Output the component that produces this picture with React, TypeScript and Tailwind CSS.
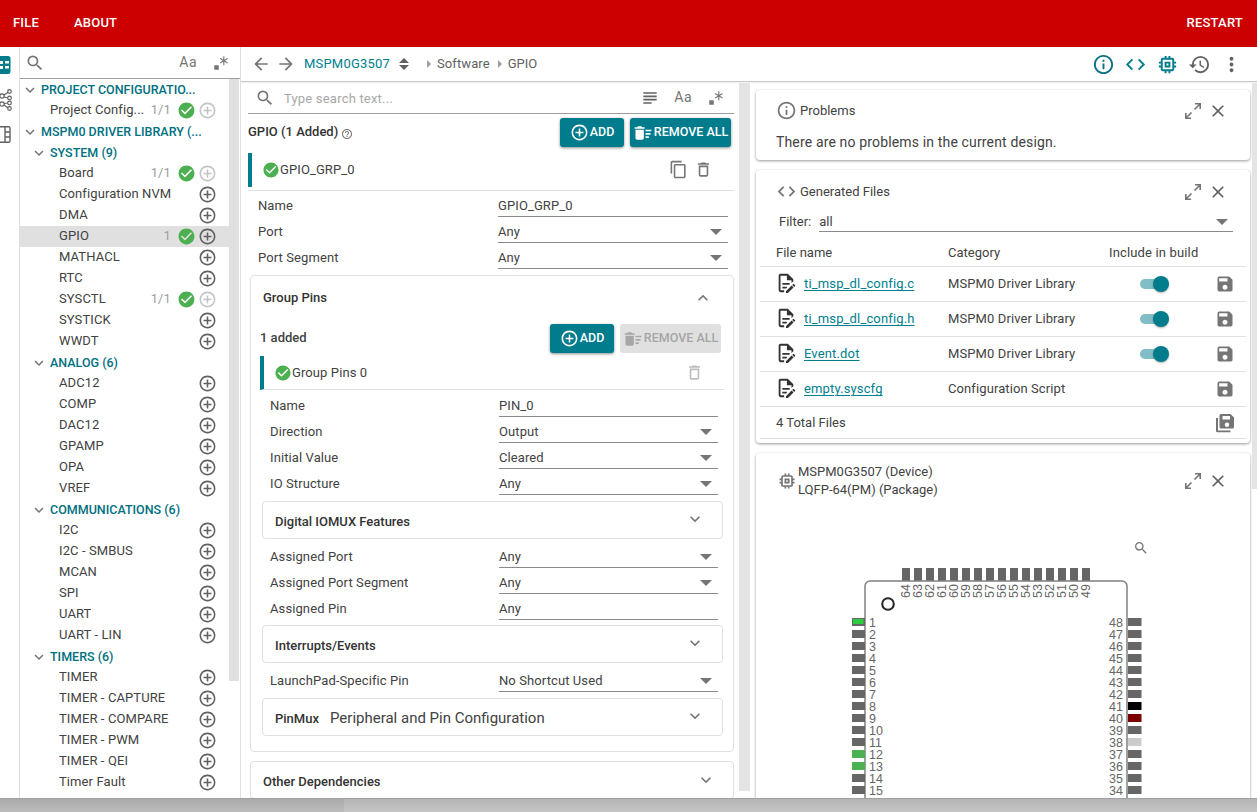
import { FunctionComponent, ReactNode } from "react";
import {
  MdAddCircleOutline,
  MdArrowBack,
  MdArrowForward,
  MdCheckCircle,
  MdClose,
  MdCode,
  MdContentCopy,
  MdDeleteOutline,
  MdDeleteSweep,
  MdExpandLess,
  MdExpandMore,
  MdHelpOutline,
  MdHistory,
  MdInfoOutline,
  MdMemory,
  MdMoreVert,
  MdSave,
  MdSearch,
  MdSubject,
} from "react-icons/md";
import { VscRegex } from "react-icons/vsc";

const Caret = () => <span className="h-0 w-0 border-x-[6px] border-t-[6px] border-x-transparent border-t-[#757575]" />;

const ExpandIcon = () => (
  <svg width="18" height="18" viewBox="0 0 18 18" fill="none" stroke="#757575" strokeWidth="1.6">
    <path d="M10.5 7.5 16 2M11 1.8h5.2V7M7.5 10.5 2 16M1.8 11v5.2H7" />
  </svg>
);

const FileIcon = () => (
  <svg width="22" height="22" viewBox="0 0 24 24" fill="#333333">
    <path d="M8,12H16V14H8V12M10,20H6V4H13V9H18V12.1L20,10.1V8L14,2H6A2,2 0 0,0 4,4V20A2,2 0 0,0 6,22H10V20M8,18H12.1L13,17.1V16H8V18M20.2,13C20.3,13 20.5,13.1 20.6,13.2L21.9,14.5C22.1,14.7 22.1,15.1 21.9,15.3L20.9,16.3L18.8,14.2L19.8,13.2C19.9,13.1 20,13 20.2,13M20.2,16.9L14.1,23H12V20.9L18.1,14.8L20.2,16.9Z" />
  </svg>
);

const SaveAllIcon = () => (
  <svg width="20" height="20" viewBox="0 0 20 20" fill="#757575">
    <path d="M6 1h9.5L19 4.500V14a1.500 1.500 0 0 1-1.500 1.500H6A1.500 1.500 0 0 1 4.500 14V2.500A1.500 1.500 0 0 1 6 1Zm1.500 2v3.500h7.500V3H7.500Zm4.500 6.500a2.200 2.200 0 1 0 0 4.400 2.200 2.200 0 0 0 0-4.400Z" />
    <path d="M1 5h2v12.500h12.500v1.800H2.500A1.500 1.500 0 0 1 1 17.800V5Z" />
  </svg>
);

const SideRow: FunctionComponent<{ label: string; count?: string; ok?: boolean; off?: boolean; active?: boolean; indent?: string }> = ({
  label,
  count,
  ok,
  off,
  active,
  indent = "pl-[39px]",
}) => (
  <div className={`flex h-[21px] items-center pr-[12px] text-[13px] tracking-[0.1px] text-[#424242] ${indent} ${active ? "bg-[#e0e0e0]" : ""}`}>
    <span className="-translate-y-[1px] truncate">{label}</span>
    <span className="ml-auto -translate-y-[1px] text-[#9e9e9e]">{count}</span>
    {ok && <MdCheckCircle className="ml-[6px] text-[#4caf50]" size={19} />}
    <MdAddCircleOutline className={`ml-[2px] ${off ? "text-[#c4c4c4]" : "text-[#616161]"}`} size={19} />
  </div>
);

const SideHead: FunctionComponent<{ label: string; sub?: boolean }> = ({ label, sub }) => (
  <div className={`flex h-[21px] items-center text-[12.5px] font-medium text-[#00707f] ${sub ? "pl-[10px]" : "pl-[1px]"}`}>
    <MdExpandMore className="mr-[2px] text-[#757575]" size={18} />
    <span className="translate-y-[1px] truncate">{label}</span>
  </div>
);

const Field: FunctionComponent<{ label: string; value: string; select?: boolean; nested?: boolean }> = ({ label, value, select, nested }) => (
  <div className="flex h-[26px] items-center pl-[10px] text-[13px] text-[#424242]">
    <span className={`translate-y-[1px] tracking-[0.1px] ${nested ? "w-[229px]" : "w-[240px]"}`}>{label}</span>
    <span className="flex h-[24px] flex-1 items-center justify-between border-b border-[#8a8a8a] pr-[6px] pt-[2px] tracking-[0.1px]">
      {value}
      {select && <Caret />}
    </span>
  </div>
);

const FoldCard: FunctionComponent<{ title: string; note?: string }> = ({ title, note }) => (
  <div className="ml-[11px] mr-[10px] flex h-[38px] items-center justify-between rounded border border-[#e0e0e0] pl-[12px] pr-[17px]">
    <span className="flex translate-y-[2px] items-center text-[13px] font-medium text-[#333333]">
      {title}
      {note && <span className="ml-[11px] -translate-y-[1px] text-[15px] font-normal text-[#424242]">{note}</span>}
    </span>
    <MdExpandMore className="-translate-y-[1px] text-[#757575]" size={20} />
  </div>
);

const TealButton: FunctionComponent<{ children: ReactNode; className: string; disabled?: boolean }> = ({ children, className, disabled }) => (
  <div
    className={`flex h-[29px] items-center justify-center gap-[1px] rounded-[3px] text-[12.5px] font-medium ${className} ${
      disabled ? "bg-[#e0e0e0] text-[#a6a6a6]" : "bg-[#007c8c] text-white shadow-[0_1px_3px_rgba(0,0,0,0.45)]"
    }`}
  >
    {children}
  </div>
);

const PanelHead: FunctionComponent<{ icon: ReactNode; children: ReactNode }> = ({ icon, children }) => (
  <div className="flex items-center pl-[20px] pr-[22px] text-[13px] text-[#424242]">
    {icon}
    <div className="flex-1">{children}</div>
    <ExpandIcon />
    <MdClose className="ml-[6px] text-[#616161]" size={20} />
  </div>
);

const files = [
  { name: "ti_msp_dl_config.c", category: "MSPM0 Driver Library", build: true },
  { name: "ti_msp_dl_config.h", category: "MSPM0 Driver Library", build: true },
  { name: "Event.dot", category: "MSPM0 Driver Library", build: true },
  { name: "empty.syscfg", category: "Configuration Script", build: false },
];

const leftPinColor: Record<number, string> = { 11: "#4caf50", 12: "#4caf50" };
const rightPinColor: Record<number, string> = { 7: "#000000", 8: "#7b0000", 10: "#cccccc" };

const ChipDiagram = () => (
  <svg width="310" height="240" viewBox="0 0 310 240" className="ml-[96px]" fontFamily="'Liberation Sans', sans-serif" fontSize="12.500" fill="#666666">
    {Array.from({ length: 16 }, (_, i) => (
      <g key={i}>
        <rect x={50 + i * 12} y="0" width="8" height="13" fill="#666666" />
        <text transform={`translate(${58 + i * 12} 30) rotate(-90)`}>{64 - i}</text>
      </g>
    ))}
    <path d="M13 240V18a5 5 0 0 1 5-5h252a5 5 0 0 1 5 5v222" fill="none" stroke="#808080" strokeWidth="1.500" />
    <circle cx="36" cy="36" r="5.800" fill="none" stroke="#222222" strokeWidth="2" />
    {Array.from({ length: 16 }, (_, i) => (
      <g key={i}>
        <rect x="0" y={50 + i * 12} width="13" height="8" fill={leftPinColor[i] ?? "#666666"} />
        {i === 0 && <rect x="1" y="51" width="10.500" height="5" fill="#2ecc40" />}
        <rect x="276" y={50 + i * 12} width="13.500" height="8" fill={rightPinColor[i] ?? "#666666"} />
        <text x="17" y={59 + i * 12}>{i + 1}</text>
        <text x="271" y={59 + i * 12} textAnchor="end">{48 - i}</text>
      </g>
    ))}
  </svg>
);

const App = () => {
  return (
    <div className="flex h-[812px] w-[1257px] flex-col overflow-hidden bg-white font-['Roboto',sans-serif]">
      <header className="flex h-[47px] shrink-0 items-center bg-[#cc0000] pb-[2px] pl-[13px] pr-[14px] text-[13px] font-medium tracking-[0.2px] text-white">
        <span>FILE</span>
        <span className="ml-[35px]">ABOUT</span>
        <span className="ml-auto">RESTART</span>
      </header>

      <div className="flex min-h-0 flex-1">
        {/* icon rail */}
        <div className="flex w-[20px] shrink-0 flex-col gap-[15px] overflow-hidden border-r border-[#e0e0e0] pt-[9px]">
          <svg width="11" height="18" viewBox="0 0 11 18">
            <path d="M0 0h8a2.500 2.500 0 0 1 2.500 2.500v13A2.500 2.500 0 0 1 8 18H0Z" fill="#007c8c" />
            <path d="M0 5h3v3H0zM0 10h3v3H0zM5 5h4v2.500H5zM5 10h4v2.500H5z" fill="#ffffff" />
          </svg>
          <svg width="13" height="22" viewBox="0 0 13 22" fill="none" stroke="#616161" strokeWidth="1.200">
            <circle cx="2" cy="7" r="2.200" />
            <circle cx="2" cy="15" r="2.200" />
            <circle cx="9.500" cy="2.500" r="1.800" />
            <circle cx="9.500" cy="9" r="1.800" />
            <circle cx="9.500" cy="14" r="1.800" />
            <circle cx="9.500" cy="19.500" r="1.800" />
            <path d="M4 6 8 3.500M4 8l4 1M4 14.500l4-.5M4 16l4 3" />
          </svg>
          <svg width="11" height="17" viewBox="0 0 11 17" fill="none" stroke="#616161" strokeWidth="1.400">
            <path d="M0 .7h8.500a1.500 1.500 0 0 1 1.500 1.500v12.600a1.500 1.500 0 0 1-1.500 1.500H0M5 1v15M5 6h5M5 11h5" />
          </svg>
        </div>

        {/* left tree */}
        <aside className="flex w-[221px] shrink-0 flex-col border-r border-[#e0e0e0]">
          <div className="flex h-[32px] shrink-0 items-center justify-between border-b border-[#9e9e9e] pl-[5px] pr-[10px] text-[#757575]">
            <MdSearch size={20} />
            <span className="ml-auto mr-[15px] text-[14px] tracking-[0.5px]">Aa</span>
            <VscRegex size={18} />
          </div>
          <div className="flex min-h-0 flex-1 overflow-hidden">
            <div className="w-[209px] shrink-0">
              <SideHead label="PROJECT CONFIGURATIO..." />
              <SideRow label="Project Config..." count="1/1" ok off indent="pl-[30px]" />
              <SideHead label="MSPM0 DRIVER LIBRARY (..." />
              <SideHead label="SYSTEM (9)" sub />
              <SideRow label="Board" count="1/1" ok off />
              <SideRow label="Configuration NVM" />
              <SideRow label="DMA" />
              <SideRow label="GPIO" count="1" ok active />
              <SideRow label="MATHACL" />
              <SideRow label="RTC" />
              <SideRow label="SYSCTL" count="1/1" ok off />
              <SideRow label="SYSTICK" />
              <SideRow label="WWDT" />
              <SideHead label="ANALOG (6)" sub />
              <SideRow label="ADC12" />
              <SideRow label="COMP" />
              <SideRow label="DAC12" />
              <SideRow label="GPAMP" />
              <SideRow label="OPA" />
              <SideRow label="VREF" />
              <SideHead label="COMMUNICATIONS (6)" sub />
              <SideRow label="I2C" />
              <SideRow label="I2C - SMBUS" />
              <SideRow label="MCAN" />
              <SideRow label="SPI" />
              <SideRow label="UART" />
              <SideRow label="UART - LIN" />
              <SideHead label="TIMERS (6)" sub />
              <SideRow label="TIMER" />
              <SideRow label="TIMER - CAPTURE" />
              <SideRow label="TIMER - COMPARE" />
              <SideRow label="TIMER - PWM" />
              <SideRow label="TIMER - QEI" />
              <SideRow label="Timer Fault" />
            </div>
            <div className="h-[602px] w-[10px] bg-[#e0e0e0]" />
          </div>
        </aside>

        {/* main area */}
        <div className="flex min-w-0 flex-1 flex-col">
          <div className="flex h-[35px] shrink-0 items-center border-b border-[#c8c8c8] pl-[10px] pr-[14px] text-[13px] text-[#616161] shadow-[0_1px_1px_rgba(0,0,0,0.05)]">
            <MdArrowBack size={20} className="text-[#757575]" />
            <MdArrowForward size={20} className="ml-[5px] text-[#757575]" />
            <span className="ml-[8px] tracking-[0.2px] text-[#00808f]">MSPM0G3507</span>
            <span className="ml-[9px] flex flex-col gap-[2px]">
              <span className="h-0 w-0 border-x-[5px] border-b-[5px] border-x-transparent border-b-[#616161]" />
              <span className="h-0 w-0 border-x-[5px] border-t-[5px] border-x-transparent border-t-[#616161]" />
            </span>
            <span className="ml-[18px] h-0 w-0 border-y-[4px] border-l-[4px] border-y-transparent border-l-[#9e9e9e]" />
            <span className="ml-[6px] tracking-[0.1px]">Software</span>
            <span className="ml-[8px] h-0 w-0 border-y-[4px] border-l-[4px] border-y-transparent border-l-[#9e9e9e]" />
            <span className="ml-[6px]">GPIO</span>
            <MdInfoOutline size={23} className="ml-auto text-[#0b7285]" />
            <MdCode size={23} className="ml-[9px] text-[#007c8c]" />
            <MdMemory size={23} className="ml-[9px] text-[#007c8c]" />
            <MdHistory size={23} className="ml-[9px] text-[#616161]" />
            <MdMoreVert size={23} className="ml-[9px] text-[#616161]" />
          </div>

          <div className="flex min-h-0 flex-1">
            {/* center column */}
            <section className="flex w-[509px] shrink-0 overflow-hidden">
              <div className="w-[498px] shrink-0 pl-[7px] pr-[5px]">
                <div className="flex h-[32px] items-center border-b border-[#9e9e9e] pl-[7px] pr-[9px] text-[#757575]">
                  <MdSearch size={20} />
                  <span className="ml-[9px] translate-y-[1px] text-[13px] tracking-[0.2px] text-[#a8a8a8]">Type search text...</span>
                  <MdSubject size={20} className="ml-auto text-[#616161]" />
                  <span className="ml-[14px] text-[14px] tracking-[0.5px]">Aa</span>
                  <VscRegex size={18} className="ml-[15px]" />
                </div>
                <div className="flex h-[39px] items-center pb-[2px] pr-[3px]">
                  <span className="-translate-y-[1px] text-[13px] font-medium text-[#333333]">GPIO (1 Added)</span>
                  <MdHelpOutline size={12} className="ml-[3px] mt-[2px] text-[#757575]" />
                  <TealButton className="ml-auto w-[64px]">
                    <MdAddCircleOutline size={19} />
                    ADD
                  </TealButton>
                  <TealButton className="ml-[6px] w-[101px]">
                    <MdDeleteSweep size={20} />
                    REMOVE ALL
                  </TealButton>
                </div>
                <div className="flex h-[34px] items-center border-l-4 border-[#007c8c] pl-[10px] pr-[21px] text-[13px] text-[#424242]">
                  <MdCheckCircle size={18} className="text-[#4caf50]" />
                  <span className="tracking-[0.1px]">GPIO_GRP_0</span>
                  <MdContentCopy size={19} className="ml-auto -translate-y-[1px] text-[#757575]" />
                  <MdDeleteOutline size={19} className="ml-[6px] -translate-y-[1px] text-[#757575]" />
                </div>
                <div className="mt-[3px] border-t border-[#e0e0e0] pr-[6px]">
                  <div className="h-[1px]" />
                  <Field label="Name" value="GPIO_GRP_0" />
                  <Field label="Port" value="Any" select />
                  <Field label="Port Segment" value="Any" select />
                </div>

                <div className="ml-[2px] mt-[5px] h-[477px] rounded border border-[#e0e0e0]">
                  <div className="flex h-[42px] items-center justify-between pl-[12px] pr-[20px] pt-[1px] text-[13px] font-medium text-[#333333]">
                    Group Pins
                    <MdExpandLess size={20} className="text-[#757575]" />
                  </div>
                  <div className="flex h-[35px] items-end pl-[9px] pr-[12px]">
                    <span className="mb-[6px] text-[13px] font-medium text-[#424242]">1 added</span>
                    <TealButton className="ml-auto w-[64px]">
                      <MdAddCircleOutline size={19} />
                      ADD
                    </TealButton>
                    <TealButton className="ml-[6px] w-[101px]" disabled>
                      <MdDeleteSweep size={20} />
                      REMOVE ALL
                    </TealButton>
                  </div>
                  <div className="ml-[9px] mr-[9px] mt-[3px] flex h-[34px] items-center border-b border-l-4 border-b-[#e0e0e0] border-l-[#007c8c] pl-[10px] pr-[20px] text-[13px] text-[#424242]">
                    <MdCheckCircle size={18} className="text-[#4caf50]" />
                    <span className="tracking-[0.1px]">Group Pins 0</span>
                    <MdDeleteOutline size={19} className="ml-auto text-[#bdbdbd]" />
                  </div>
                  <div className="ml-[9px] mr-[15px] mt-[2px]">
                    <Field label="Name" value="PIN_0" nested />
                    <Field label="Direction" value="Output" select nested />
                    <Field label="Initial Value" value="Cleared" select nested />
                    <Field label="IO Structure" value="Any" select nested />
                  </div>
                  <div className="mt-[5px]">
                    <FoldCard title="Digital IOMUX Features" />
                  </div>
                  <div className="ml-[9px] mr-[15px] mt-[4px]">
                    <Field label="Assigned Port" value="Any" select nested />
                    <Field label="Assigned Port Segment" value="Any" select nested />
                    <Field label="Assigned Pin" value="Any" nested />
                  </div>
                  <div className="mt-[4px]">
                    <FoldCard title="Interrupts/Events" />
                  </div>
                  <div className="ml-[9px] mr-[15px] mt-[4px]">
                    <Field label="LaunchPad-Specific Pin" value="No Shortcut Used" select nested />
                  </div>
                  <div className="mt-[5px]">
                    <FoldCard title="PinMux" note="Peripheral and Pin Configuration" />
                  </div>
                </div>
                <div className="ml-[2px] mt-[9px] flex h-[38px] items-center justify-between rounded border border-[#e0e0e0] pl-[12px] pr-[17px] text-[13px] font-medium text-[#333333]">
                  <span className="translate-y-[2px]">Other Dependencies</span>
                  <MdExpandMore size={20} className="text-[#757575]" />
                </div>
              </div>
              <div className="mt-[1px] h-[708px] w-[11px] bg-[#e4e4e4]" />
            </section>

            {/* right column */}
            <section className="flex min-w-0 flex-1 flex-col gap-[10px] overflow-hidden pl-[6px] pr-[2px] pt-[8px]">
              <div className="h-[70px] shrink-0 rounded bg-white pt-[10px] shadow-[0_1px_3px_rgba(0,0,0,0.4)]">
                <PanelHead icon={<MdInfoOutline size={21} className="mr-[3px] text-[#757575]" />}>Problems</PanelHead>
                <p className="ml-[20px] mt-[11px] text-[14px] tracking-[0.15px] text-[#424242]">There are no problems in the current design.</p>
              </div>

              <div className="h-[273px] shrink-0 rounded bg-white pt-[11px] shadow-[0_1px_3px_rgba(0,0,0,0.4)]">
                <PanelHead icon={<MdCode size={21} className="mr-[3px] text-[#757575]" />}>Generated Files</PanelHead>
                <div className="ml-[23px] mr-[17px] mt-[9px] flex h-[21px] items-center text-[13px] text-[#424242]">
                  <span className="mr-[8px]">Filter:</span>
                  <span className="flex h-full flex-1 items-center justify-between border-b border-[#8a8a8a] pr-[5px] pt-[1px]">
                    all
                    <Caret />
                  </span>
                </div>
                <div className="mx-[4px] mt-[7px] flex h-[28px] items-center border-b border-[#e0e0e0] pl-[16px] text-[13px] text-[#424242]">
                  <span className="w-[172px]">File name</span>
                  <span className="w-[161px]">Category</span>
                  <span className="tracking-[0.15px]">Include in build</span>
                </div>
                {files.map((file) => (
                  <div key={file.name} className="mx-[4px] flex h-[35px] items-center border-b border-[#e0e0e0] text-[13px] text-[#424242]">
                    <span className="ml-[15px] w-[29px] -translate-y-[1px]">
                      <FileIcon />
                    </span>
                    <span className="w-[144px] tracking-[0.15px] text-[#00808f] underline underline-offset-2">{file.name}</span>
                    <span className="w-[192px] tracking-[0.1px]">{file.category}</span>
                    <span className="relative h-[12px] w-[29px]">
                      {file.build && (
                        <>
                          <span className="absolute left-0 top-[1px] h-[10px] w-[26px] rounded-full bg-[#80bdc6]" />
                          <span className="absolute left-[13px] top-[-2px] h-[16px] w-[16px] rounded-full bg-[#007c8c] shadow-[0_1px_2px_rgba(0,0,0,0.3)]" />
                        </>
                      )}
                    </span>
                    <MdSave size={20} className="ml-[46px] text-[#757575]" />
                  </div>
                ))}
                <div className="mx-[4px] flex h-[32px] items-center justify-between border-b border-[#e0e0e0] pl-[16px] pr-[11px] text-[13px] text-[#424242]">
                  4 Total Files
                  <SaveAllIcon />
                </div>
              </div>

              <div className="shrink-0 rounded bg-white pt-[10px] shadow-[0_1px_3px_rgba(0,0,0,0.4)]">
                <PanelHead icon={<MdMemory size={20} className="mr-[1px] ml-[1px] text-[#757575]" />}>
                  <div className="leading-[18px]">
                    MSPM0G3507 (Device)
                    <br />
                    LQFP-64(PM) (Package)
                  </div>
                </PanelHead>
                <div className="relative pt-[69px]">
                  <MdSearch size={16} className="absolute left-[377px] top-[41px] text-[#757575]" />
                  <ChipDiagram />
                </div>
              </div>
            </section>
            <div className="mt-[1px] h-[406px] w-[5px] shrink-0 bg-[#e4e4e4]" />
          </div>
        </div>
      </div>

      <div className="relative z-10 flex h-[14px] shrink-0 border-t border-[#a0a0a0] bg-gradient-to-b from-[#b4b4b4] to-[#c6c6c6]">
        <div className="h-full w-[344px] bg-black/5" />
      </div>
    </div>
  );
};

export default App;
